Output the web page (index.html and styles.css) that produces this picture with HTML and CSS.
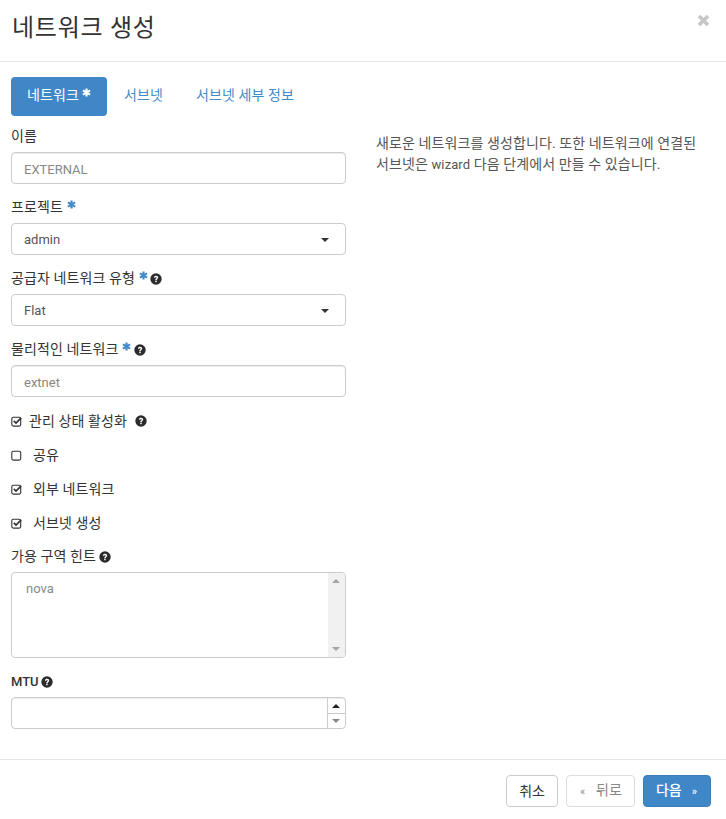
FILE: index.html
```html
<!DOCTYPE html>
<html lang="ko">
<head>
  <meta charset="UTF-8" />
  <title>네트워크 생성</title>
  <link rel="stylesheet" href="styles.css">
</head>
<body>
  <svg class="defs" width="0" height="0">
    <symbol id="help" viewBox="0 0 12 12">
      <circle cx="6" cy="6" r="5.7" fill="#2b2b2b"/>
      <path d="M3.9 4.7C4 3.4 4.9 2.8 6.1 2.8C7.3 2.8 8.2 3.5 8.2 4.6C8.2 6 6.7 6 6.7 7.2H5.2C5.2 5.5 6.6 5.5 6.6 4.7C6.6 4.3 6.4 4.1 6 4.1C5.6 4.1 5.4 4.4 5.3 4.8Z" fill="#fff"/>
      <rect x="5.2" y="7.8" width="1.5" height="1.4" fill="#fff"/>
    </symbol>
    <symbol id="star" viewBox="0 0 10 10">
      <path d="M5 .5V9.5M1 2.7L9 7.3M9 2.7L1 7.3" stroke="currentColor" stroke-width="2.4" fill="none"/>
    </symbol>
    <symbol id="box" viewBox="0 0 11 11">
      <rect x=".8" y="1.2" width="8.9" height="8.9" rx="1.5" fill="none" stroke="#333" stroke-width="1.1"/>
    </symbol>
    <symbol id="tick" viewBox="0 0 11 11">
      <rect x=".8" y="1.2" width="8.9" height="8.9" rx="1.5" fill="none" stroke="#333" stroke-width="1.1"/>
      <path d="M2.8 4.8L5 7L10.2 1.8" fill="none" stroke="#333" stroke-width="1.7"/>
    </symbol>
  </svg>

  <div class="modal">
    <header class="modalHeader">
      <h4>네트워크 생성</h4>
      <svg class="close" viewBox="0 0 13 13"><path d="M2 2L11 11M11 2L2 11" stroke="#c6c6c6" stroke-width="3.6" fill="none"/></svg>
    </header>

    <div class="modalBody">
      <ul class="tabs">
        <li class="tab active">네트워크 <svg class="star"><use href="#star"/></svg></li>
        <li class="tab">서브넷</li>
        <li class="tab">서브넷 세부 정보</li>
      </ul>

      <div class="columns">
        <form class="formCol">
          <div class="field">
            <label>이름</label>
            <div class="control placeholder">EXTERNAL</div>
          </div>
          <div class="field">
            <label>프로젝트 <svg class="star"><use href="#star"/></svg></label>
            <div class="control select">admin<i class="caret"></i></div>
          </div>
          <div class="field">
            <label>공급자 네트워크 유형 <svg class="star"><use href="#star"/></svg> <svg class="help"><use href="#help"/></svg></label>
            <div class="control select">Flat<i class="caret"></i></div>
          </div>
          <div class="field lastField">
            <label>물리적인 네트워크 <svg class="star"><use href="#star"/></svg> <svg class="help"><use href="#help"/></svg></label>
            <div class="control placeholder">extnet</div>
          </div>

          <div class="check"><svg class="box"><use href="#tick"/></svg><span class="tight">관리 상태 활성화</span><svg class="help helpFar"><use href="#help"/></svg></div>
          <div class="check"><svg class="box"><use href="#box"/></svg><span>공유</span></div>
          <div class="check"><svg class="box"><use href="#tick"/></svg><span>외부 네트워크</span></div>
          <div class="check"><svg class="box"><use href="#tick"/></svg><span>서브넷 생성</span></div>

          <div class="field hints">
            <label>가용 구역 힌트 <svg class="help"><use href="#help"/></svg></label>
            <div class="listbox">
              <div class="listText">nova</div>
              <div class="scrollbar"><i class="up"></i><i class="down"></i></div>
            </div>
          </div>
          <div class="field mtu">
            <label><span class="latin">MTU</span> <svg class="help"><use href="#help"/></svg></label>
            <div class="control number">
              <div class="spin"><span><i class="spinUp"></i></span><span><i class="spinDown"></i></span></div>
            </div>
          </div>
        </form>

        <div class="helpText">
          <span class="helpLine">새로운 네트워크를 생성합니다. 또한 네트워크에 연결된</span>
          <span class="helpLine">서브넷은 <span class="word">wizard</span> 다음 단계에서 만들 수 있습니다.</span>
        </div>
      </div>
    </div>

    <footer class="modalFooter">
      <button class="btn" type="button">취소</button>
      <button class="btn back" type="button"><small>«</small>뒤로</button>
      <button class="btn next" type="button">다음<small>»</small></button>
    </footer>
  </div>
</body>
</html>
```

FILE: styles.css
```css
* {
  box-sizing: border-box;
  margin: 0;
  padding: 0;
}
body {
  font-family: Roboto, "Noto Sans CJK KR", sans-serif;
  font-size: 14px;
  line-height: 20px;
  letter-spacing: .1px;
  color: #333;
  background-color: #fff;
}
.defs {
  position: absolute;
}
.modalHeader {
  height: 62px;
  padding: 12px 16px 0 12px;
  border-bottom: 1px solid #e5e5e5;
  display: flex;
  justify-content: space-between;
}
.modalHeader h4 {
  font-size: 24px;
  font-weight: 400;
  line-height: 32px;
  letter-spacing: .75px;
}
.close {
  width: 13px;
  height: 13px;
  margin-top: 2px;
}
.modalBody {
  padding: 15px 11px 0;
  height: 697px;
}
.tabs {
  list-style: none;
  display: flex;
  height: 39px;
}
.tab {
  padding: 8px 16px 0 17px;
  color: #428bca;
}
.tab.active {
  width: 96px;
  padding-left: 16px;
  padding-right: 0;
  background-color: #3f87c7;
  color: #fff;
  border-radius: 4px;
}
.star {
  width: 9px;
  height: 9px;
  color: #428bca;
  vertical-align: 3px;
}
.tab.active .star {
  color: #fff;
  margin-left: -1px;
}
.help {
  width: 12px;
  height: 12px;
  margin-left: -1px;
  vertical-align: -2px;
}
.columns {
  display: flex;
  padding-top: 10px;
}
.formCol {
  width: 335px;
  flex: none;
}
.field {
  margin-bottom: 13px;
}
.lastField {
  margin-bottom: 7px;
}
.field label {
  display: block;
  margin-bottom: 6px;
}
.field.mtu label {
  margin-bottom: 5px;
}
.latin {
  font-size: 13px;
  font-weight: 500;
  letter-spacing: 0;
}
.control {
  height: 32px;
  border: 1px solid #ccc;
  border-radius: 4px;
  box-shadow: inset 0 1px 1px rgba(0, 0, 0, .075);
  padding: 0 12px;
  font-size: 13px;
  line-height: 32px;
  letter-spacing: 0;
  color: #555;
  position: relative;
}
.placeholder {
  color: #888;
  padding-top: 1px;
}
.select {
  display: flex;
  justify-content: space-between;
  align-items: center;
  box-shadow: none;
  padding-top: 2px;
}
.caret {
  width: 0;
  height: 0;
  border-left: 4px solid transparent;
  border-right: 4px solid transparent;
  border-top: 4px solid #333;
  margin-right: 4px;
}
.check {
  height: 34px;
  display: flex;
  align-items: center;
}
.check span {
  margin-left: 11px;
}
.check .tight {
  margin-left: 7px;
}
.box {
  width: 11px;
  height: 11px;
}
.helpFar {
  margin-left: 8px;
}
.hints {
  margin-top: 6px;
  margin-bottom: 13px;
}
.listbox {
  height: 86px;
  border: 1px solid #ccc;
  border-radius: 4px;
  display: flex;
  justify-content: space-between;
  overflow: hidden;
}
.listText {
  padding: 6px 14px;
  font-size: 13px;
  letter-spacing: 0;
  color: #888;
}
.scrollbar {
  width: 17px;
  background-color: #f1f1f1;
  position: relative;
}
.scrollbar i,
.spin i {
  position: absolute;
  width: 0;
  height: 0;
  left: 4px;
  border-left: 4px solid transparent;
  border-right: 4px solid transparent;
}
.up {
  top: 6px;
  border-bottom: 4px solid #a3a3a3;
}
.down {
  bottom: 6px;
  border-top: 4px solid #a3a3a3;
}
.number {
  padding: 0;
}
.spin {
  position: absolute;
  top: 0;
  right: 0;
  width: 18px;
  height: 30px;
  border-left: 1px solid #ccc;
  display: flex;
  flex-direction: column;
}
.spin span {
  flex: 1;
  position: relative;
}
.spin span + span {
  border-top: 1px solid #ccc;
}
.spinUp {
  top: 6px;
  border-bottom: 4px solid #222;
}
.spinDown {
  top: 5px;
  border-top: 4px solid #8a8a8a;
}
.helpText {
  margin: 7px 0 0 30px;
  color: #555;
  line-height: 21px;
}
.helpLine {
  display: block;
  white-space: nowrap;
}
.word {
  font-size: 13px;
}
.modalFooter {
  height: 60px;
  border-top: 1px solid #e5e5e5;
  padding: 15px 15px 0 0;
  display: flex;
  justify-content: flex-end;
  gap: 8px;
}
.btn {
  height: 32px;
  padding: 0 12px;
  font: inherit;
  color: #333;
  background-color: #fff;
  border: 1px solid #ccc;
  border-radius: 4px;
}
.btn small {
  font-size: 11px;
}
.back {
  padding: 0 12px 0 13px;
  color: #888;
  border-color: #ddd;
}
.back small {
  margin-right: 11px;
}
.next {
  padding: 0 13px 0 12px;
  color: #fff;
  background-color: #3f87c7;
  border-color: #3b7fbc;
  font-weight: 500;
}
.next small {
  margin-left: 10px;
}
```
